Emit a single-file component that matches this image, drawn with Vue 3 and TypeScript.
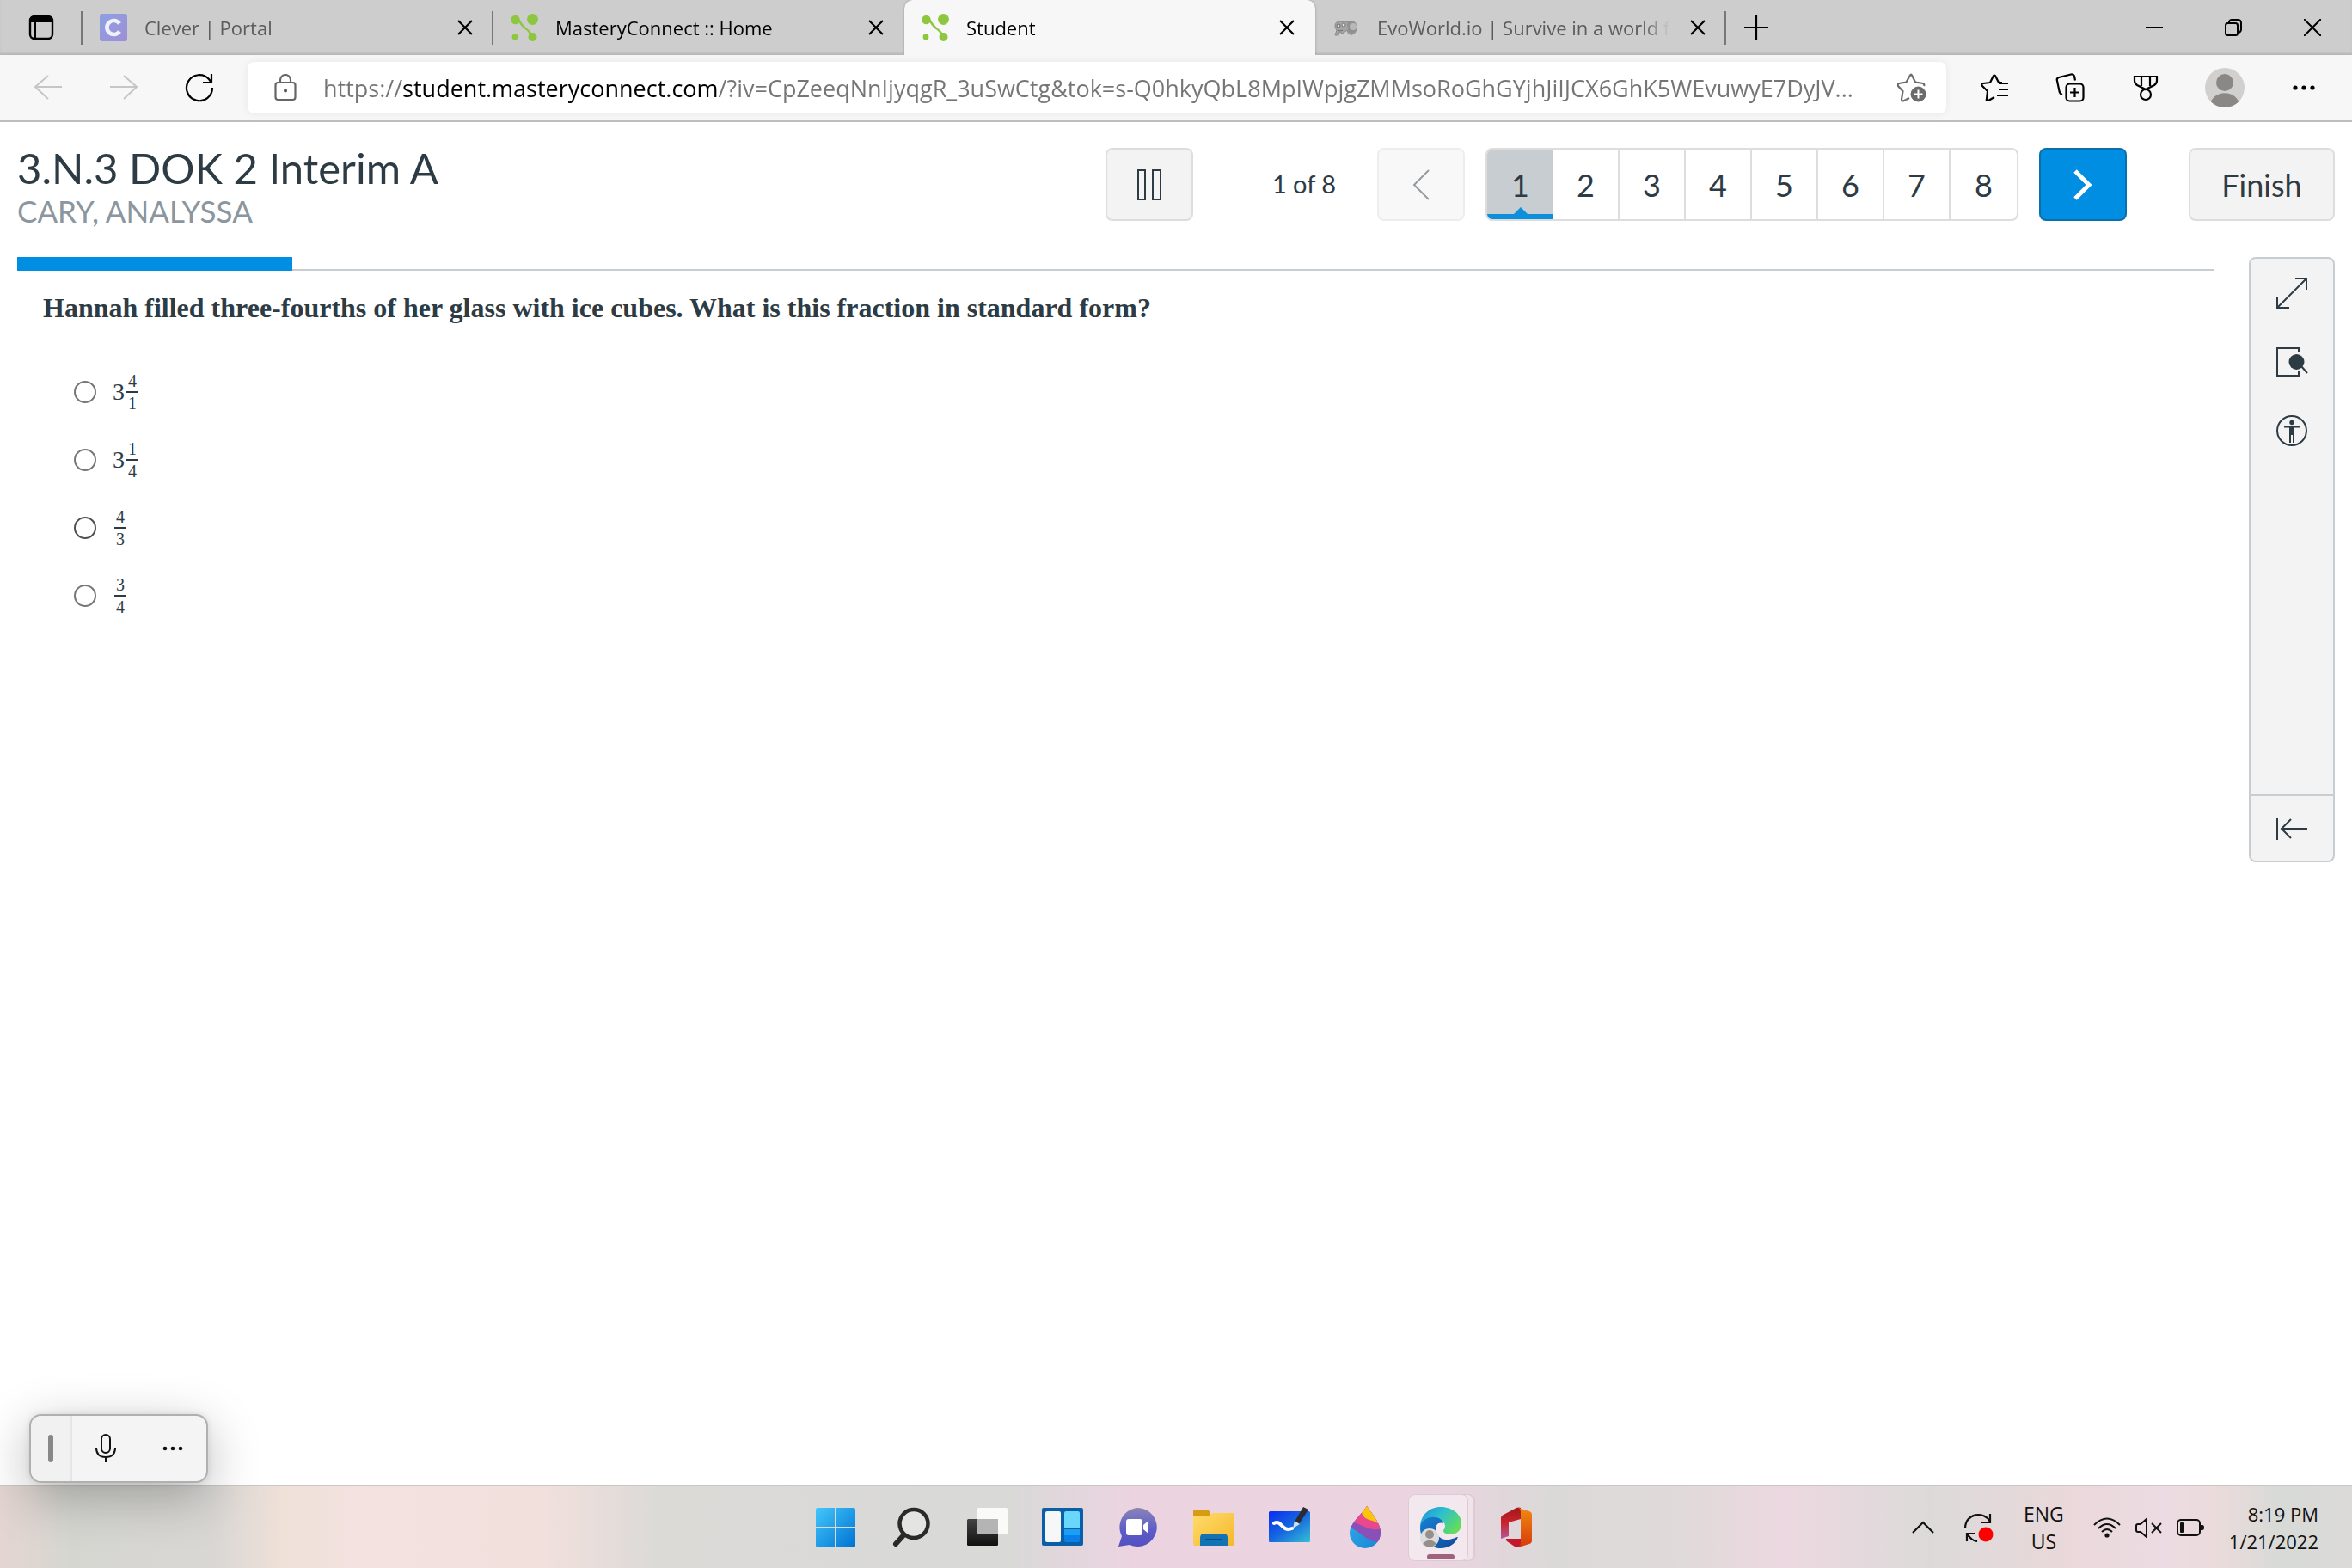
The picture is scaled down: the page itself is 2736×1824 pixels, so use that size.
<script setup lang="ts">
import { ref } from 'vue'

interface Tab {
  title: string
  icon: 'clever' | 'mastery' | 'evo'
  muted?: boolean
}

interface Choice {
  id: string
  whole?: string
  top: string
  bottom: string
}

const tabs: Tab[] = [
  { title: 'Clever | Portal', icon: 'clever', muted: true },
  { title: 'MasteryConnect :: Home', icon: 'mastery' },
  { title: 'Student', icon: 'mastery' },
  { title: 'EvoWorld.io | Survive in a world f', icon: 'evo', muted: true },
]
const activeTab = ref(2)

const url = ref(
  'https://student.masteryconnect.com/?iv=CpZeeqNnIjyqgR_3uSwCtg&tok=s-Q0hkyQbL8MpIWpjgZMMsoRoGhGYjhJiIJCX6GhK5WEvuwyE7DyJV...',
)

const questions = [1, 2, 3, 4, 5, 6, 7, 8]
const current = ref(1)

const choices: Choice[] = [
  { id: 'a', whole: '3', top: '4', bottom: '1' },
  { id: 'b', whole: '3', top: '1', bottom: '4' },
  { id: 'c', top: '4', bottom: '3' },
  { id: 'd', top: '3', bottom: '4' },
]
const answer = ref('')
</script>

<template>
  <div class="screen">
    <header class="tabstrip">
      <button class="tab-actions" aria-label="Tab actions menu">
        <svg width="30" height="30" viewBox="0 0 30 30">
          <rect x="2" y="2" width="26" height="26" rx="5" fill="none" stroke="#000" stroke-width="2.4" />
          <path d="M2 9V6a4 4 0 0 1 4-4h18a4 4 0 0 1 4 4v3z" fill="#000" />
          <path d="M8 9v19" stroke="#000" stroke-width="2" />
        </svg>
      </button>
      <div
        v-for="(tab, i) in tabs"
        :key="i"
        class="tab"
        :class="{ active: i === activeTab, muted: tab.muted, ruled: i !== activeTab && i !== activeTab - 1 }"
      >
        <button class="tab-main" @click="activeTab = i">
          <svg v-if="tab.icon === 'clever'" class="favicon" viewBox="0 0 32 32">
            <defs>
              <linearGradient id="cl" x1="0" y1="0" x2="1" y2="1">
                <stop offset="0" stop-color="#8ea0e0" />
                <stop offset="1" stop-color="#9d8fd8" />
              </linearGradient>
            </defs>
            <rect width="32" height="32" rx="3" fill="url(#cl)" />
            <path d="M23 11.5a8 8 0 1 0 0 9" fill="none" stroke="#f0f0fa" stroke-width="4.6" />
          </svg>
          <svg v-else-if="tab.icon === 'mastery'" class="favicon" viewBox="0 0 32 32">
            <g fill="#8dc63f">
              <circle cx="5.500" cy="7" r="5.200" />
              <circle cx="25.500" cy="6.500" r="6.500" />
              <circle cx="5" cy="27" r="3.400" />
              <circle cx="25.500" cy="27" r="5" />
              <path d="M9 9C15 20 19 17 22 24l3-1C20 16 16 17 10 6z" />
            </g>
          </svg>
          <svg v-else class="favicon" viewBox="0 0 32 32">
            <path
              d="M3 14q0-5 6-5l5 1q4-2 8-1 5-1 6 6 0 8-5 9-5 1-6-5l-5 4-4-2-1 4H3l2-6q-2-2-2-5z"
              fill="#a4a4a4"
              stroke="#8a8a8a"
            />
            <path d="M17 10q5-3 9 1 3 5 0 10-5 5-8-1z" fill="#909090" />
            <circle cx="24" cy="15" r="4" fill="#b8b8b8" />
            <circle cx="7" cy="14" r="2" fill="#ddd" stroke="#666" />
            <circle cx="13" cy="13" r="2" fill="#e6e6e6" stroke="#777" />
            <path d="M6 19q3 2 6 0" fill="none" stroke="#6d6d6d" />
          </svg>
          <span class="tab-title">{{ tab.title }}</span>
        </button>
        <button class="tab-close" aria-label="Close tab">
          <svg width="18" height="18" viewBox="0 0 18 18">
            <path d="M1 1l16 16M17 1L1 17" stroke="#000" stroke-width="2.2" />
          </svg>
        </button>
      </div>
      <button class="new-tab" aria-label="New tab">
        <svg width="28" height="28" viewBox="0 0 28 28">
          <path d="M14 0v28M0 14h28" stroke="#000" stroke-width="2.2" />
        </svg>
      </button>
      <div class="window-buttons">
        <button aria-label="Minimize">
          <svg width="20" height="20" viewBox="0 0 20 20"><path d="M0 10h20" stroke="#000" stroke-width="2" /></svg>
        </button>
        <button aria-label="Restore">
          <svg width="20" height="20" viewBox="0 0 20 20" fill="none" stroke="#000" stroke-width="2">
            <rect x="1" y="5" width="14" height="14" rx="2.500" />
            <path d="M5 4V3.500Q6 1 8 1h7q4 0 4 4v7q0 3-3 4" />
          </svg>
        </button>
        <button aria-label="Close">
          <svg width="20" height="20" viewBox="0 0 20 20"><path d="M0 0l20 20M20 0L0 20" stroke="#000" stroke-width="2" /></svg>
        </button>
      </div>
    </header>

    <nav class="toolbar">
      <div class="nav-buttons">
        <button aria-label="Back" disabled>
          <svg width="32" height="32" viewBox="0 0 32 32" fill="none" stroke="#c6c6c6" stroke-width="2">
            <path d="M32 15H1M16 2L1 15l15 14" />
          </svg>
        </button>
        <button aria-label="Forward" disabled>
          <svg width="32" height="32" viewBox="0 0 32 32" fill="none" stroke="#c6c6c6" stroke-width="2">
            <path d="M0 15h31M16 2l15 13-15 14" />
          </svg>
        </button>
        <button aria-label="Refresh">
          <svg width="34" height="34" viewBox="0 0 34 34" fill="none" stroke="#000" stroke-width="2.2">
            <path d="M32 17A15 15 0 1 1 28 7l3 4M31 1v10H21" />
          </svg>
        </button>
      </div>
      <div class="address">
        <button class="lock" aria-label="View site information">
          <svg width="26" height="32" viewBox="0 0 26 32" fill="none" stroke="#666" stroke-width="2.200">
            <rect x="1.500" y="10" width="23" height="20" rx="3" />
            <path d="M7 10V7a6 6 0 0 1 12 0v3" />
            <circle cx="13" cy="19.500" r="2" fill="#555" stroke="none" />
          </svg>
        </button>
        <input v-model="url" class="url" type="text" aria-label="Address and search bar" spellcheck="false" />
        <button class="fav" aria-label="Add to favorites">
          <svg width="34" height="34" viewBox="0 0 34 34">
            <path
              d="M10 31l-3 1.500q-2 0-2-2L6.500 21 1 15q-1-2 1-3l8.500-1.500L15 2.500q1-2 2 0l4 8 9 1.500q2 1 1 3"
              fill="none"
              stroke="#6b6b6b"
              stroke-width="2.200"
            />
            <path d="M10 31l4-2" stroke="#6b6b6b" stroke-width="2.200" />
            <circle cx="24.500" cy="24.500" r="9" fill="#6b6b6b" />
            <path d="M24.500 19.500v10M19.500 24.500h10" stroke="#fff" stroke-width="2" />
          </svg>
        </button>
      </div>
      <div class="tools">
        <button aria-label="Favorites">
          <svg width="32" height="32" viewBox="0 0 32 32" fill="none" stroke="#000" stroke-width="2.200" stroke-linejoin="round">
            <path d="M16 27l-7 4q-3 1-2-2l1-9-6-6q-2-2 1-3l8-1 4-8q1-1 2 0l4 8h4M21 11h11M21 18h11M19 25h13" />
          </svg>
        </button>
        <button aria-label="Collections">
          <svg width="34" height="34" viewBox="0 0 34 34" fill="none" stroke="#000" stroke-width="2.200">
            <rect x="12.500" y="12.500" width="20" height="20" rx="4" />
            <path d="M22.500 17v11M17 22.500h11M8 25Q5 24 4.500 21L2 9Q1 6 4 5l14-3.500q3-.5 4 2l1 5" />
          </svg>
        </button>
        <button aria-label="Rewards">
          <svg width="30" height="32" viewBox="0 0 30 32" fill="none" stroke="#000" stroke-width="2.200">
            <path d="M2 3h26v5q0 3-3 5l-10 5L5 13Q2 11 2 8zM10 3v11M20 3v11" />
            <circle cx="15" cy="24" r="6" />
          </svg>
        </button>
        <button class="profile" aria-label="Profile">
          <svg width="46" height="46" viewBox="0 0 46 46">
            <defs><clipPath id="av"><circle cx="23" cy="23" r="23" /></clipPath></defs>
            <circle cx="23" cy="23" r="23" fill="#d2d0ce" />
            <g clip-path="url(#av)" fill="#8a8886">
              <circle cx="23" cy="17" r="10" />
              <path d="M6 45c0-21 34-21 34 0z" />
            </g>
          </svg>
        </button>
        <button aria-label="Settings and more">
          <svg width="26" height="6" viewBox="0 0 26 6">
            <circle cx="3" cy="3" r="2.600" /><circle cx="13" cy="3" r="2.600" /><circle cx="23" cy="3" r="2.600" />
          </svg>
        </button>
      </div>
    </nav>

    <main class="page">
      <header class="exam-head">
        <div class="exam-title">
          <h1>3.N.3 DOK 2 Interim A</h1>
          <p>CARY, ANALYSSA</p>
        </div>
        <button class="box-btn" aria-label="Pause">
          <svg width="30" height="36" viewBox="0 0 30 36" fill="none" stroke="#2d3b45" stroke-width="2">
            <rect x="2" y="1" width="8" height="34" /><rect x="19" y="1" width="9" height="34" />
          </svg>
        </button>
        <span class="count">{{ current }} of 8</span>
        <button class="box-btn prev" aria-label="Previous" disabled>
          <svg width="20" height="36" viewBox="0 0 20 36" fill="none" stroke="#2d3b45" stroke-width="2">
            <path d="M19 1L2 18l17 17" />
          </svg>
        </button>
        <div class="pager">
          <button v-for="n in questions" :key="n" :class="{ current: n === current }" @click="current = n">
            {{ n }}
          </button>
        </div>
        <button class="box-btn next" aria-label="Next">
          <svg width="22" height="38" viewBox="0 0 22 38" fill="none" stroke="#fff" stroke-width="5">
            <path d="M2 3l16 16L2 35" />
          </svg>
        </button>
        <button class="box-btn finish">Finish</button>
      </header>

      <div class="exam-body">
        <section class="question">
          <div class="progress"><div class="progress-bar"></div></div>
          <h2>Hannah filled three-fourths of her glass with ice cubes. What is this fraction in standard form?</h2>
          <div class="choices">
            <label v-for="c in choices" :key="c.id" class="choice">
              <input v-model="answer" type="radio" name="answer" :value="c.id" :class="{ hovered: c.id === 'c' }" />
              <span class="value">
                <span v-if="c.whole">{{ c.whole }}</span>
                <span class="frac"><span class="num">{{ c.top }}</span><span class="den">{{ c.bottom }}</span></span>
              </span>
            </label>
          </div>
        </section>

        <aside class="side">
          <div class="side-tools">
            <button aria-label="Full screen">
              <svg width="38" height="38" viewBox="0 0 38 38" fill="none" stroke="#2d3b45" stroke-width="2">
                <path d="M2 36L36 2M23 2h13v13M2 23v13h14" />
              </svg>
            </button>
            <button aria-label="Line reader">
              <svg width="38" height="38" viewBox="0 0 38 38">
                <path d="M27 8V3H2v32h25v-5M30 24l7 8" fill="none" stroke="#2d3b45" stroke-width="2" />
                <circle cx="24.500" cy="19" r="9" fill="#2d3b45" />
              </svg>
            </button>
            <button aria-label="Accessibility">
              <svg width="38" height="38" viewBox="0 0 38 38">
                <circle cx="19" cy="19" r="17" fill="none" stroke="#2d3b45" stroke-width="2" />
                <circle cx="19" cy="9.500" r="2.700" fill="#2d3b45" />
                <path d="M10 13h18v2.500h-6V33h-2V24h-2v9h-2V15.500h-6z" fill="#2d3b45" />
              </svg>
            </button>
          </div>
          <button class="collapse" aria-label="Collapse toolbar">
            <svg width="38" height="28" viewBox="0 0 38 28" fill="none" stroke="#2d3b45" stroke-width="2">
              <path d="M2 1v26M37 14H7M18 3L7 14l11 11" />
            </svg>
          </button>
        </aside>
      </div>
    </main>

    <footer class="taskbar">
      <div class="apps">
        <button aria-label="Start">
          <svg width="48" height="48" viewBox="0 0 48 48">
            <defs>
              <linearGradient id="win" x1="0" y1="0" x2="1" y2="1">
                <stop offset="0" stop-color="#43c7fb" /><stop offset="1" stop-color="#0072d3" />
              </linearGradient>
            </defs>
            <path
              d="M3 1h20v22H1V3q0-2 2-2zM25 1h20q2 0 2 2v20H25zM1 25h22v22H3q-2 0-2-2zM25 25h22v20q0 2-2 2H25z"
              fill="url(#win)"
            />
          </svg>
        </button>
        <button aria-label="Search">
          <svg width="48" height="48" viewBox="0 0 48 48" fill="none" stroke="#2a2a2a">
            <circle cx="27" cy="19.500" r="16.500" stroke-width="4.500" fill="#e4e4e3" />
            <path d="M15 33L6 43" stroke-width="6" stroke-linecap="round" />
          </svg>
        </button>
        <button aria-label="Task view">
          <svg width="48" height="48" viewBox="0 0 48 48">
            <defs>
              <linearGradient id="tv" x1="0" y1="0" x2="0" y2="1">
                <stop offset="0" stop-color="#444" /><stop offset="1" stop-color="#111" />
              </linearGradient>
            </defs>
            <rect x="1" y="14" width="36" height="31" rx="1.500" fill="url(#tv)" />
            <rect x="13" y="1" width="35" height="31" rx="1.500" fill="#fff" fill-opacity=".85" />
            <path d="M13 14h24v18H13z" fill="#b4b4b4" />
          </svg>
        </button>
        <button aria-label="Widgets">
          <svg width="48" height="48" viewBox="0 0 48 48">
            <rect y="1" width="48" height="44" rx="2" fill="#0b5ea8" />
            <rect x="4" y="5" width="18" height="36" rx="2" fill="#f7f7f7" />
            <path d="M28 5h14q2 0 2 2v18H26V7q0-2 2-2z" fill="#69d6fb" />
            <path d="M26 26h18v7H26z" fill="#1a9ff5" />
            <path d="M26 33h18v6q0 2-2 2H28q-2 0-2-2z" fill="#0a7fe8" />
          </svg>
        </button>
        <button aria-label="Chat">
          <svg width="48" height="48" viewBox="0 0 48 48">
            <defs>
              <linearGradient id="chat" x1="0" y1="0" x2="0" y2="1">
                <stop offset="0" stop-color="#8a84b8" /><stop offset=".6" stop-color="#5c5bc8" /><stop offset="1" stop-color="#5450c0" />
              </linearGradient>
            </defs>
            <path d="M24 1a22.500 22.500 0 1 1-10 43L1 46l4-12A22.500 22.500 0 0 1 24 1z" fill="url(#chat)" />
            <rect x="10" y="14" width="19" height="19" rx="3" fill="#fff" />
            <path d="M30 21l6-5v15l-6-5z" fill="#fff" />
          </svg>
        </button>
        <button aria-label="File Explorer">
          <svg width="48" height="48" viewBox="0 0 48 48">
            <defs>
              <linearGradient id="fold" x1="0" y1="0" x2="1" y2="1">
                <stop offset="0" stop-color="#ffdc6b" /><stop offset="1" stop-color="#f5b72c" />
              </linearGradient>
            </defs>
            <path d="M2 3h14q2 0 4 4v8H0V5q0-2 2-2z" fill="#d79c14" />
            <path d="M0 11h18l4-4h24q2 0 2 2v34q0 2-2 2H2q-2 0-2-2z" fill="url(#fold)" />
            <path d="M8 45V36q0-5 5-5h22q5 0 5 5v9z" fill="#1272b4" />
            <path d="M15 38h18" stroke="#0a4c85" stroke-width="2" stroke-linecap="round" />
          </svg>
        </button>
        <button aria-label="Whiteboard">
          <svg width="48" height="48" viewBox="0 0 48 48">
            <defs>
              <linearGradient id="wb" x1="0" y1="0" x2="1" y2="1">
                <stop offset="0" stop-color="#0a2cf0" /><stop offset=".5" stop-color="#1768e0" /><stop offset="1" stop-color="#35c0d5" />
              </linearGradient>
            </defs>
            <rect y="5" width="48" height="36" rx="1.500" fill="url(#wb)" />
            <path d="M6 19c9-5 9 11 21 6" fill="none" stroke="#fff" stroke-width="4" stroke-linecap="round" />
            <path d="M30 17L40 0l6 3-11 17z" fill="#2b2b33" />
            <path d="M30 16l6 4-8 5z" fill="#cfe0ee" />
          </svg>
        </button>
        <button aria-label="Paint 3D">
          <svg width="48" height="50" viewBox="0 0 48 50">
            <defs>
              <clipPath id="drop"><path d="M26 0C34 12 42 20 42 31a18 18 0 0 1-36 0C6 20 20 10 26 0z" /></clipPath>
              <linearGradient id="dp" x1="0" y1="0" x2="1" y2="1">
                <stop offset="0" stop-color="#35b5ee" /><stop offset="1" stop-color="#1681d2" />
              </linearGradient>
            </defs>
            <g clip-path="url(#drop)">
              <path d="M0 0h48v50H0z" fill="url(#dp)" />
              <path d="M0 25c16-2 22 18 44 17V0H0z" fill="#8a50b8" />
              <path d="M0 20c17-6 24 12 44 6V0H0z" fill="#e9488c" />
              <path d="M20 8c4 10 13 7 19 12V0H20z" fill="#fbc50a" />
            </g>
          </svg>
        </button>
        <button aria-label="Microsoft Edge">
          <span class="edge-card">
            <svg width="50" height="50" viewBox="0 0 50 50">
              <defs>
                <linearGradient id="eg" x1="0" y1="0" x2="1" y2=".6">
                  <stop offset="0" stop-color="#1b8fd8" /><stop offset=".5" stop-color="#2fc0cd" /><stop offset="1" stop-color="#62dc5b" />
                </linearGradient>
                <linearGradient id="eb" x1="0" y1="0" x2="1" y2="1">
                  <stop offset="0" stop-color="#1580d4" /><stop offset="1" stop-color="#11499b" />
                </linearGradient>
              </defs>
              <path d="M1 25C1 10 12 1 25 1c14 0 24 9 24 19 0 9-6 13-13 13-4 0-8-2-8-4s2-2 2-6-4-7-10-7C10 16 2 20 1 25z" fill="url(#eg)" />
              <path d="M1 25c1-9 10-13 17-12 6 0 9 4 10 7-6-2-9 2-9 7 0 9 9 13 16 12 5-1 8-3 10-3-3 8-11 13-20 13C11 49 1 39 1 25z" fill="url(#eb)" />
              <circle cx="12" cy="37" r="11" fill="#dedcdb" />
              <circle cx="12" cy="33" r="5" fill="#958f8c" />
              <path d="M4 44q8-9 16 0-8 7-16 0z" fill="#958f8c" />
            </svg>
            <span class="running"></span>
          </span>
        </button>
        <button aria-label="Office">
          <svg width="48" height="48" viewBox="0 0 48 48">
            <defs>
              <linearGradient id="of" x1="0" y1="0" x2="0" y2="1">
                <stop offset="0" stop-color="#f08a12" /><stop offset="1" stop-color="#d63a0a" />
              </linearGradient>
              <linearGradient id="ol" x1="0" y1="0" x2="0" y2="1">
                <stop offset="0" stop-color="#a3161c" /><stop offset=".5" stop-color="#c9252d" /><stop offset="1" stop-color="#b4589a" />
              </linearGradient>
            </defs>
            <path d="M29 1v13l-14 4v16l-9 3V13q0-3 3-4L24 1q3-1 5 0z" fill="url(#ol)" />
            <path d="M12 37h17v9q-4 2-7 0l-9-6q-2-2-1-3z" fill="#c4182e" />
            <path d="M26 1l13 4q3 1 3 4v30q0 3-3 4l-13 4q3-2 3-5V6q0-4-3-5z" fill="url(#of)" />
          </svg>
        </button>
      </div>

      <div class="tray">
        <button aria-label="Show hidden icons">
          <svg width="26" height="16" viewBox="0 0 26 16" fill="none" stroke="#111" stroke-width="2.200"><path d="M1 14L13 2l12 12" /></svg>
        </button>
        <button class="sync" aria-label="Update available">
          <svg width="36" height="34" viewBox="0 0 36 34" fill="none" stroke="#111" stroke-width="2.200">
            <path d="M2 18C2 0 24-3 31 10M31 1v10H20M4 33V24h9M5 25q4 7 11 8" />
            <circle cx="26" cy="25" r="8.500" fill="#f00" stroke="none" />
          </svg>
        </button>
        <button class="lang">ENG<br />US</button>
        <button class="status" aria-label="Network, volume and battery">
          <svg width="32" height="26" viewBox="0 0 32 26" fill="none" stroke="#111" stroke-width="2">
            <path d="M1 10q15-15 30 0M6 14q10-10 20 0M10 18q6-6 12 0" />
            <circle cx="16" cy="22" r="2.600" fill="#111" stroke="none" />
          </svg>
          <svg width="32" height="26" viewBox="0 0 32 26" fill="none" stroke="#111" stroke-width="2">
            <path d="M14 3v21l-7-6H4q-2 0-2-2v-5q0-2 2-2h3zM20 8l11 11M31 8L20 19" />
          </svg>
          <svg width="34" height="26" viewBox="0 0 34 26" fill="none" stroke="#111" stroke-width="2">
            <rect x="2" y="4" width="26" height="18" rx="4" />
            <path d="M29 10h2q2 0 2 3t-2 3h-2z" fill="#111" stroke="none" />
            <rect x="5" y="7" width="4" height="12" rx="1" fill="#111" stroke="none" />
          </svg>
        </button>
        <button class="clock">8:19 PM<br />1/21/2022</button>
      </div>
    </footer>

    <div class="voice">
      <span class="grip"><i></i></span>
      <button aria-label="Dictate">
        <svg width="24" height="34" viewBox="0 0 24 34" fill="none" stroke="#111" stroke-width="2">
          <rect x="7" y="1" width="10" height="21" rx="5" />
          <path d="M1 16q0 11 11 11t11-11M12 27v6" />
        </svg>
      </button>
      <button aria-label="More options">
        <svg width="24" height="6" viewBox="0 0 24 6" fill="#111">
          <circle cx="3" cy="3" r="2.300" /><circle cx="12" cy="3" r="2.300" /><circle cx="21" cy="3" r="2.300" />
        </svg>
      </button>
    </div>
  </div>
</template>

<style>
body {
  margin: 0;
  background: #fff;
}
</style>

<style scoped>
.screen {
  position: relative;
  display: flex;
  flex-direction: column;
  min-height: 100vh;
  font-family: 'Segoe UI', 'Open Sans', sans-serif;
  color: #000;
}
.screen * {
  box-sizing: border-box;
}
button {
  margin: 0;
  padding: 0;
  border: 0;
  background: none;
  font: inherit;
  color: inherit;
  display: flex;
  align-items: center;
  justify-content: center;
}
svg {
  display: block;
  flex: none;
}

/* Tab strip */
.tabstrip {
  display: flex;
  height: 64px;
  background: #cdcdcd;
  box-shadow: inset 0 -3px 3px -1px #b4b4b4;
}
.tab-actions {
  width: 96px;
  position: relative;
}
.tab-actions::after,
.ruled::after {
  content: '';
  position: absolute;
  right: 0;
  top: 13px;
  width: 2px;
  height: 39px;
  background: #777;
}
.tab {
  position: relative;
  display: flex;
  flex: 0 1 478px;
  min-width: 0;
}
.tab.active {
  background: #f7f7f7;
  border-radius: 10px 10px 0 0;
  box-shadow: 0 0 3px #999;
  clip-path: inset(0 -4px 0 -4px);
}
.tab-main {
  flex: 1;
  min-width: 0;
  justify-content: flex-start;
  padding-left: 20px;
  gap: 20px;
}
.favicon {
  width: 32px;
  height: 32px;
}
.tab-title {
  flex: 1;
  text-align: left;
  font-size: 22px;
  line-height: 32px;
  white-space: nowrap;
  mask-image: linear-gradient(90deg, #000 calc(100% - 30px), transparent);
}
.muted .tab-title {
  color: #5c5c5c;
}
.tab-close {
  width: 66px;
}
.new-tab {
  width: 70px;
}
.window-buttons {
  display: flex;
  margin-left: auto;
}
.window-buttons button {
  width: 92px;
}

/* Toolbar */
.toolbar {
  display: flex;
  align-items: center;
  height: 78px;
  background: #f7f7f7;
  border-bottom: 2px solid #bdbdbd;
}
.nav-buttons {
  display: flex;
  padding: 0 12px;
}
.nav-buttons button {
  width: 88px;
  height: 60px;
}
.address {
  flex: 1;
  display: flex;
  align-items: center;
  height: 60px;
  background: #fff;
  border-radius: 8px;
  box-shadow: 0 0 8px #e6e6e6;
}
.lock {
  width: 88px;
}
.url {
  flex: 1;
  min-width: 0;
  border: 0;
  padding: 0;
  height: 44px;
  outline: none;
  font: 27px 'Segoe UI', 'Open Sans', sans-serif;
  color: transparent;
  background: linear-gradient(90deg, #757575 92px, #000 92px, #000 458px, #757575 458px);
  background-clip: text;
}
.fav {
  width: 80px;
}
.tools {
  display: flex;
  padding: 0 12px;
}
.tools button {
  width: 88px;
  height: 60px;
}
.tools .profile {
  width: 96px;
}

/* Exam header */
.page {
  flex: 1;
  padding: 30px 20px;
  font-family: 'Lato', sans-serif;
  color: #2d3b45;
}
.exam-head {
  display: flex;
  align-items: flex-start;
  height: 86px;
}
.exam-title {
  flex: 1;
}
h1 {
  margin: 0;
  font-size: 49px;
  line-height: 46px;
  font-weight: 400;
}
.exam-title p {
  margin: 0;
  font-size: 35px;
  line-height: 54px;
  color: #8b969e;
}
.box-btn {
  width: 102px;
  height: 85px;
  border: 2px solid #ddd;
  border-radius: 8px;
  background: #f3f3f3;
}
.count {
  width: 214px;
  padding-left: 44px;
  text-align: center;
  font-size: 29px;
  line-height: 83px;
}
.prev {
  opacity: 0.5;
}
.pager {
  display: flex;
  height: 85px;
  margin: 0 24px;
  border: 2px solid #ddd;
  border-radius: 8px;
}
.pager button {
  position: relative;
  width: 77px;
  font-size: 36px;
  border-right: 2px solid #ddd;
}
.pager button:last-child {
  border-right: 0;
}
.pager .current {
  border-right: 0;
  background: #c7cdd1;
  border-bottom: 6px solid #0e8fdb;
  border-radius: 6px 0 0 6px;
  padding-top: 6px;
}
.pager .current::after {
  content: '';
  position: absolute;
  bottom: 0;
  left: 50%;
  margin-left: -8px;
  border: 8px solid transparent;
  border-top-width: 0;
  border-bottom-color: #0e8fdb;
}
.next {
  background: #008ee2;
  border-color: #0b6fae;
}
.finish {
  width: 170px;
  margin-left: 72px;
  font-size: 36px;
}

/* Exam body */
.exam-body {
  display: flex;
  align-items: flex-start;
  gap: 40px;
  margin-top: 41px;
}
.question {
  flex: 1;
}
.progress {
  height: 16px;
  border-bottom: 2px solid #c7cdd1;
}
.progress-bar {
  width: 320px;
  height: 16px;
  background: #008ee2;
}
h2 {
  margin: 23px 30px 38px;
  font: bold 32px/40px 'Liberation Serif', serif;
}
.choices {
  padding-left: 66px;
}
.choice {
  display: flex;
  align-items: center;
  gap: 19px;
  height: 79px;
}
.choice input {
  appearance: none;
  margin: 0;
  width: 26px;
  height: 26px;
  border: 2px solid #767676;
  border-radius: 50%;
  background: #fff;
}
.choice input.hovered {
  border-color: #4f4f4f;
}
.choice input:checked {
  box-shadow: inset 0 0 0 5px #fff;
  background: #0075ff;
}
.value {
  display: flex;
  align-items: center;
  font: 28px/28px 'Liberation Serif', serif;
}
.frac {
  display: flex;
  flex-direction: column;
  align-items: center;
  width: 14px;
  margin: 0 2px;
  font-size: 20px;
  line-height: 24px;
}
.num {
  border-bottom: 2px solid #2d3b45;
  width: 14px;
  text-align: center;
}

/* Side panel */
.side {
  width: 100px;
  border: 2px solid #c7cdd1;
  border-radius: 8px;
  background: #f3f3f3;
}
.side-tools {
  height: 625px;
  border-bottom: 2px solid #c7cdd1;
}
.side-tools button {
  width: 96px;
  height: 80px;
}
.collapse {
  width: 96px;
  height: 75px;
}

/* Taskbar */
.taskbar {
  display: grid;
  grid-template-columns: 1fr auto 1fr;
  height: 96px;
  border-top: 1px solid #c9c6c5;
  background: linear-gradient(
    90deg,
    #e4d5d1 0,
    #d6d6d1 3%,
    #d8d7d4 9%,
    #efe0d8 12%,
    #f3e2df 15%,
    #f2e0dd 23%,
    #dbdad7 28%,
    #d9d9d8 43%,
    #ebd4e0 48%,
    #ecd3e0 60%,
    #dbd9d8 66%,
    #dfdad9 71%,
    #ecd8e0 76%,
    #dcdad9 82%,
    #ead8da 88%,
    #ecdbe2 92%,
    #ecdbdb 94%,
    #d7dad7 97%,
    #dcdad8 100%
  );
}
.apps {
  grid-column: 2;
  display: flex;
}
.apps button {
  width: 88px;
}
.edge-card {
  position: relative;
  display: flex;
  align-items: center;
  justify-content: center;
  width: 70px;
  height: 78px;
  margin-right: 6px;
  padding-left: 6px;
  border-radius: 8px;
  background: #f3e8ee;
  border: 1px solid #dccad4;
  box-shadow: 7px 0 0 -1px #f1e3ea, 8px 0 0 0 #dccad4;
}
.running {
  position: absolute;
  left: 50%;
  bottom: 1px;
  width: 32px;
  height: 6px;
  margin-left: -13px;
  border-radius: 3px;
  background: #a0617f;
}
.tray {
  display: flex;
  justify-content: flex-end;
  padding-right: 39px;
  font-size: 23px;
  line-height: 32px;
  color: #111;
}
.tray button {
  margin-left: 34px;
}
.tray .lang {
  text-align: center;
}
.tray .status {
  gap: 16px;
}
.tray .clock {
  text-align: right;
  margin-left: 28px;
  font-size: 22px;
}

/* Floating dictation bar */
.voice {
  position: absolute;
  left: 34px;
  bottom: 99px;
  display: flex;
  width: 208px;
  height: 80px;
  border: 2px solid #b0b0b0;
  border-radius: 14px;
  background: #f4f4f4;
  box-shadow: 0 16px 60px rgba(0, 0, 0, 0.28), 0 0 8px rgba(0, 0, 0, 0.1);
}
.grip {
  display: flex;
  align-items: center;
  justify-content: center;
  width: 48px;
  border-right: 2px solid #e6e6e6;
  border-radius: 12px 0 0 12px;
  background: #f1f1f1;
}
.grip i {
  width: 6px;
  height: 32px;
  border-radius: 3px;
  background: #888;
}
.voice button {
  flex: 1;
}
</style>
